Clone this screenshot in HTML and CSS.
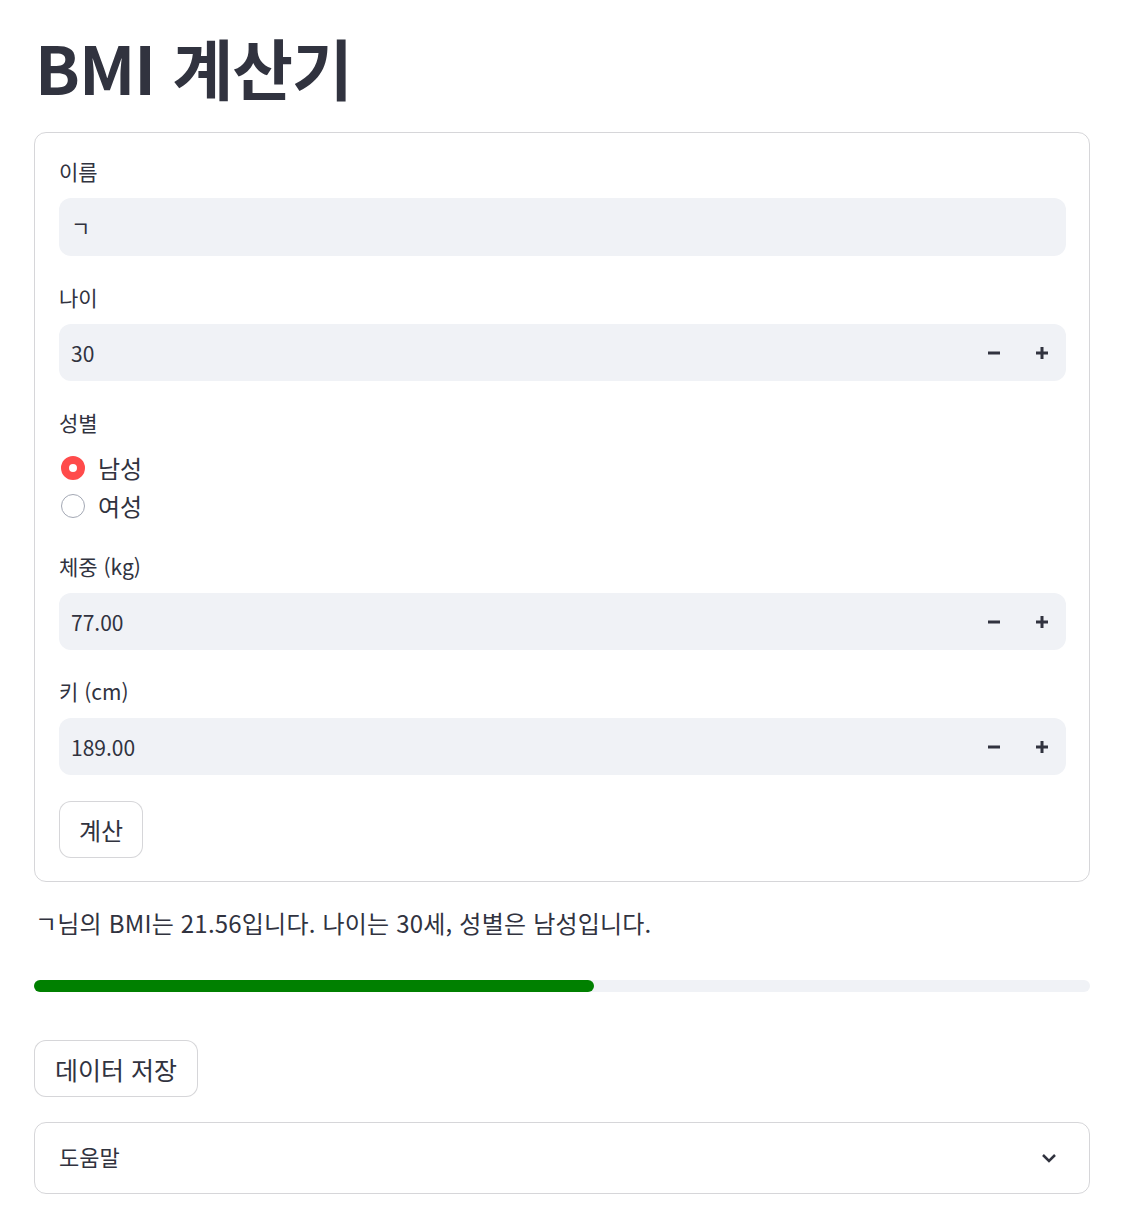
FILE: index.html
```html
<!DOCTYPE html>
<html lang="ko">
<head>
<meta charset="utf-8">
<title>BMI 계산기</title>
<link rel="stylesheet" href="styles.css">
</head>
<body>
<main class="main">
  <h1 class="title">BMI 계산기</h1>

  <form class="form-box">
    <div class="widget">
      <label class="label">이름</label>
      <div class="input">ㄱ</div>
    </div>

    <div class="widget">
      <label class="label">나이</label>
      <div class="input number">
        <span class="value">30</span>
        <span class="stepper">
          <svg class="step-icon" viewBox="0 0 12 12"><path d="M0 6h12" /></svg>
          <svg class="step-icon" viewBox="0 0 12 12"><path d="M0 6h12M6 0v12" /></svg>
        </span>
      </div>
    </div>

    <div class="widget">
      <label class="label">성별</label>
      <div class="radio-group">
        <div class="radio-item"><span class="radio checked"></span><span class="radio-text">남성</span></div>
        <div class="radio-item"><span class="radio"></span><span class="radio-text">여성</span></div>
      </div>
    </div>

    <div class="widget">
      <label class="label">체중 (kg)</label>
      <div class="input number">
        <span class="value">77.00</span>
        <span class="stepper">
          <svg class="step-icon" viewBox="0 0 12 12"><path d="M0 6h12" /></svg>
          <svg class="step-icon" viewBox="0 0 12 12"><path d="M0 6h12M6 0v12" /></svg>
        </span>
      </div>
    </div>

    <div class="widget">
      <label class="label">키 (cm)</label>
      <div class="input number">
        <span class="value">189.00</span>
        <span class="stepper">
          <svg class="step-icon" viewBox="0 0 12 12"><path d="M0 6h12" /></svg>
          <svg class="step-icon" viewBox="0 0 12 12"><path d="M0 6h12M6 0v12" /></svg>
        </span>
      </div>
    </div>

    <div class="widget">
      <button type="button" class="btn">계산</button>
    </div>
  </form>

  <p class="result">ㄱ님의 BMI는 21.56입니다. 나이는 30세, 성별은 남성입니다.</p>

  <div class="progress"><div class="progress-fill" style="width:53%"></div></div>

  <button type="button" class="btn save">데이터 저장</button>

  <div class="expander">
    <span class="exp-title">도움말</span>
    <svg class="chevron" viewBox="0 0 24 24"><path d="M6 9l6 6 6-6" /></svg>
  </div>
</main>
</body>
</html>
```

FILE: styles.css
```css
* { box-sizing: border-box; }

body {
  margin: 0;
  background: #ffffff;
  color: #31333f;
  font-family: "Noto Sans CJK KR", "Noto Sans", sans-serif;
}

.main {
  padding: 24px 58px 0 34px;
  display: flex;
  flex-direction: column;
}

.title {
  margin: 0 0 0 1px;
  font-size: 66px;
  font-weight: 700;
  line-height: 84px;
  letter-spacing: -1px;
  color: #31333f;
}

.form-box {
  margin: 24px 0 0 0;
  border: 1px solid rgba(49, 51, 63, 0.2);
  border-radius: 12px;
  padding: 23px 23px 23px 24px;
  display: flex;
  flex-direction: column;
  gap: 26px;
}

.widget {
  display: flex;
  flex-direction: column;
}

.label {
  height: 42px;
  font-size: 21px;
  line-height: 30px;
  color: #31333f;
}

.input {
  height: 58px;
  background: #f0f2f6;
  border-radius: 12px;
  padding: 0 12px;
  display: flex;
  align-items: center;
  font-size: 21px;
  color: #31333f;
}

.input.number {
  justify-content: space-between;
  height: 57px;
}

.stepper {
  display: flex;
  gap: 36px;
  padding-right: 6px;
}

.step-icon {
  width: 12px;
  height: 12px;
  fill: none;
  stroke: #31333f;
  stroke-width: 3;
}

.radio-group {
  display: flex;
  flex-direction: column;
}

.radio-item {
  height: 38px;
  display: flex;
  align-items: center;
  gap: 13px;
  padding-left: 2px;
}

.radio {
  width: 24px;
  height: 24px;
  border-radius: 50%;
  border: 1.5px solid #a3a8b4;
  background: #ffffff;
}

.radio.checked {
  border: 8px solid #ff4b4b;
  background: #ffffff;
}

.radio-text {
  font-size: 24px;
  line-height: 30px;
}

.btn {
  align-self: flex-start;
  height: 57px;
  padding: 0 19px;
  background: #ffffff;
  border: 1px solid rgba(49, 51, 63, 0.2);
  border-radius: 12px;
  font-family: inherit;
  font-size: 24px;
  color: #31333f;
}

.result {
  margin: 22px 0 0 1px;
  font-size: 24px;
  line-height: 38px;
  letter-spacing: 0.2px;
}

.progress {
  margin-top: 38px;
  height: 12px;
  border-radius: 6px;
  background: #f0f2f6;
}

.progress-fill {
  height: 100%;
  border-radius: 6px;
  background: #008000;
}

.save {
  margin-top: 48px;
  font-size: 25px;
  padding: 0 20px;
}

.expander {
  margin-top: 25px;
  height: 72px;
  border: 1px solid rgba(49, 51, 63, 0.2);
  border-radius: 12px;
  padding: 0 28px 0 24px;
  display: flex;
  align-items: center;
  justify-content: space-between;
}

.exp-title {
  font-size: 22px;
  line-height: 30px;
  margin-top: -4px;
}

.chevron {
  width: 24px;
  height: 24px;
  fill: none;
  stroke: #31333f;
  stroke-width: 2.5;
}
```
